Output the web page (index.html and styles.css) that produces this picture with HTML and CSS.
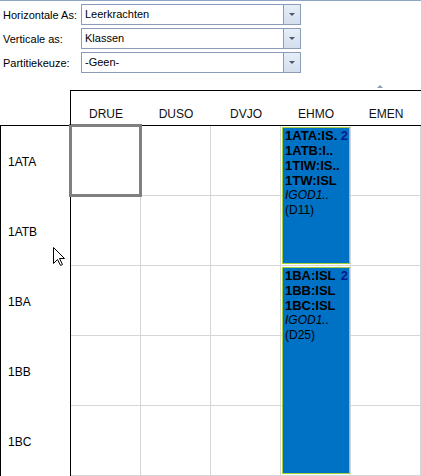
FILE: index.html
```html
<!DOCTYPE html>
<html>
<head>
<meta charset="utf-8">
<link rel="stylesheet" href="styles.css">
</head>
<body>
<div class="page">
  <div class="form">
    <div class="row"><span class="label">Horizontale As:</span><div class="combo"><span class="value">Leerkrachten</span><span class="btn"><span class="tri"></span></span></div></div>
    <div class="row"><span class="label">Verticale as:</span><div class="combo"><span class="value">Klassen</span><span class="btn"><span class="tri"></span></span></div></div>
    <div class="row"><span class="label">Partitiekeuze:</span><div class="combo"><span class="value">-Geen-</span><span class="btn"><span class="tri"></span></span></div></div>
  </div>

  <div class="header">
    <span class="sort"></span>
    <div class="hcell">DRUE</div>
    <div class="hcell">DUSO</div>
    <div class="hcell">DVJO</div>
    <div class="hcell">EHMO</div>
    <div class="hcell">EMEN</div>
  </div>

  <div class="body">
    <div class="labels">
      <div class="rlabel">1ATA</div>
      <div class="rlabel">1ATB</div>
      <div class="rlabel">1BA</div>
      <div class="rlabel">1BB</div>
      <div class="rlabel">1BC</div>
    </div>
    <div class="stack">
      <div class="cells">
        <div class="cell"></div><div class="cell"></div><div class="cell"></div><div class="cell"></div><div class="cell"></div>
        <div class="cell"></div><div class="cell"></div><div class="cell"></div><div class="cell"></div><div class="cell"></div>
        <div class="cell"></div><div class="cell"></div><div class="cell"></div><div class="cell"></div><div class="cell"></div>
        <div class="cell"></div><div class="cell"></div><div class="cell"></div><div class="cell"></div><div class="cell"></div>
        <div class="cell"></div><div class="cell"></div><div class="cell"></div><div class="cell"></div><div class="cell"></div>
      </div>
      <div class="items">
        <div class="selected"></div>
        <div class="block block-a">
          <div class="line b first"><span class="txt">1ATA:IS.</span><span class="num">2</span></div>
          <div class="line b">1ATB:I..</div>
          <div class="line b">1TIW:IS..</div>
          <div class="line b">1TW:ISL</div>
          <div class="line i">IGOD1..</div>
          <div class="line">(D11)</div>
        </div>
        <div class="block block-b">
          <div class="line b first"><span class="txt">1BA:ISL</span><span class="num">2</span></div>
          <div class="line b">1BB:ISL</div>
          <div class="line b">1BC:ISL</div>
          <div class="line i">IGOD1..</div>
          <div class="line">(D25)</div>
        </div>
      </div>
    </div>
  </div>

  <svg class="cursor" width="13" height="20" viewBox="0 0 13 20">
    <path d="M0.5 0.5 L0.5 16.5 L4.5 12.5 L7.5 18.5 L9.5 17.5 L6.5 11.5 L11.5 11.5 Z" fill="#fff" stroke="#000" stroke-width="1" stroke-linejoin="miter"/>
  </svg>
</div>
</body>
</html>
```

FILE: styles.css
```css
html, body {
  margin: 0;
  padding: 0;
  background: #fff;
}

.page {
  position: relative;
  width: 421px;
  height: 476px;
  overflow: hidden;
  border-top: 1px solid #8fa5c4;
  box-sizing: border-box;
  font-family: "Liberation Sans", Arial, sans-serif;
  color: #000;
}

.form {
  display: flex;
  flex-direction: column;
  gap: 3px;
  padding: 3px 0 0 3px;
  height: 89px;
  box-sizing: border-box;
}

.row {
  display: flex;
  align-items: center;
  height: 21px;
}

.label {
  width: 78px;
  font-size: 11px;
  color: #000;
}

.combo {
  display: flex;
  width: 220px;
  height: 21px;
  box-sizing: border-box;
  border: 1px solid #8a9cb8;
  background: #fff;
}

.value {
  flex: 1;
  font-size: 11px;
  line-height: 19px;
  padding-left: 3px;
}

.btn {
  width: 16px;
  border-left: 1px solid #8a9cb8;
  background: linear-gradient(#e6eef8, #d3dfee);
  display: flex;
  align-items: center;
  justify-content: center;
}

.tri {
  width: 0;
  height: 0;
  border-left: 3px solid transparent;
  border-right: 3px solid transparent;
  border-top: 3px solid #4a566b;
}

.header {
  position: relative;
  display: flex;
  margin-left: 70px;
  height: 35px;
  box-sizing: border-box;
  border-top: 1px solid #000;
  border-left: 1px solid #000;
}

.sort {
  position: absolute;
  left: 306px;
  top: -6px;
  width: 0;
  height: 0;
  border-left: 3px solid transparent;
  border-right: 3px solid transparent;
  border-bottom: 3px solid #8a9cb8;
}

.hcell {
  width: 70px;
  display: flex;
  align-items: flex-end;
  justify-content: center;
  font-size: 12px;
  line-height: 14px;
  padding-bottom: 4px;
  box-sizing: border-box;
  color: #111;
}

.body {
  display: flex;
  border-top: 1px solid #000;
}

.labels {
  width: 71px;
  box-sizing: border-box;
  border-left: 1px solid #000;
  border-right: 1px solid #000;
  display: flex;
  flex-direction: column;
  flex-shrink: 0;
}

.rlabel {
  height: 70px;
  display: flex;
  align-items: center;
  padding-left: 7px;
  font-size: 12px;
  padding-top: 1px;
  box-sizing: border-box;
}

.stack {
  display: grid;
}

.cells, .items {
  grid-area: 1 / 1;
  display: grid;
  grid-template-columns: repeat(5, 70px);
  grid-template-rows: repeat(5, 70px);
}

.cell {
  border-right: 1px solid #d6d6d6;
  border-bottom: 1px solid #d6d6d6;
}

.selected {
  grid-column: 1;
  grid-row: 1;
  margin: -2px -1px -1px -2px;
  border: 3px solid #808080;
}

.block {
  grid-column: 4;
  background: #0072c6;
  border: 1px solid #a2cf3a;
  margin: 1px 1px 2px 1px;
  padding: 0 1px 0 2px;
  font-size: 12px;
  line-height: 15px;
  color: #000;
  overflow: hidden;
}

.block-a { grid-row: 1 / 3; }
.block-b { grid-row: 3 / 6; }

.line {
  white-space: nowrap;
  overflow: hidden;
}

.line.b {
  font-weight: bold;
  font-size: 13px;
}
.line.i { font-style: italic; }

.line.first {
  display: flex;
  justify-content: space-between;
}

.num {
  color: #0a1a8c;
}

.cursor {
  position: absolute;
  left: 53px;
  top: 246px;
}
```
